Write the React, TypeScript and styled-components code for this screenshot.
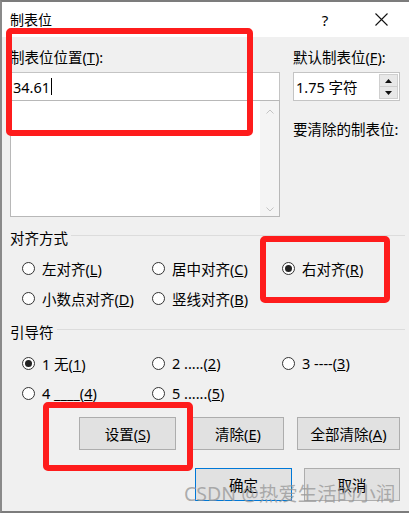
import styled, { createGlobalStyle } from "styled-components";

const GlobalStyle = createGlobalStyle`
  html, body {
    margin: 0;
    padding: 0;
    background: #ffffff;
  }
  body {
    font-family: "Noto Sans", "Noto Sans CJK SC", sans-serif;
    font-size: 14px;
    color: #000;
  }
  * {
    box-sizing: border-box;
  }
`;

const Window = styled.div`
  position: relative;
  width: 409px;
  height: 513px;
  background: #f0f0f0;
  border-top: 2px solid #7c7c7c;
  border-left: 2px solid #8a8a8a;
  border-bottom: 2px solid #7c7c7c;
  overflow: hidden;
`;

const TitleBar = styled.div`
  height: 35px;
  background: #ffffff;
  display: flex;
  align-items: center;
  padding-left: 8px;
`;

const TitleText = styled.div`
  flex: 1;
  font-size: 14px;
  line-height: 18px;
`;

const TitleButton = styled.div`
  width: 56px;
  display: flex;
  justify-content: center;
  align-items: center;
  font-size: 15px;
  line-height: 18px;
`;

const Body = styled.div`
  padding: 11px 9px 0 8px;
`;

const TopGrid = styled.div`
  display: grid;
  grid-template-columns: 270px 107px;
  column-gap: 13px;
`;

const Column = styled.div`
  display: flex;
  flex-direction: column;
`;

const Label = styled.div<{ $gap?: number }>`
  line-height: 18px;
  height: 18px;
  font-size: 14.5px;
  margin-top: ${(p) => p.$gap ?? 0}px;
  margin-bottom: 6px;
  white-space: nowrap;
`;

const TextInput = styled.div`
  height: 29px;
  background: #fff;
  border: 1px solid #c4c4c4;
  display: flex;
  align-items: center;
  padding-left: 2px;
  font-size: 14.5px;
`;

const Caret = styled.span`
  display: inline-block;
  width: 1px;
  height: 17px;
  background: #000;
  margin-left: 1px;
`;

const ListBox = styled.div`
  height: 117px;
  margin-top: -1px;
  background: #fff;
  border: 1px solid #b8b8b8;
  display: flex;
  justify-content: flex-end;
`;

const ScrollTrack = styled.div`
  width: 19px;
  background: #f4f4f4;
  display: flex;
  flex-direction: column;
  justify-content: space-between;
  align-items: center;
  padding: 8px 0 4px;
`;

const SpinBox = styled.div`
  height: 29px;
  background: #fff;
  border: 1px solid #c4c4c4;
  display: flex;
  align-items: center;
  padding-left: 2px;
  font-size: 14.5px;
`;

const SpinValue = styled.div`
  flex: 1;
  white-space: nowrap;
`;

const SpinButtons = styled.div`
  width: 19px;
  height: 25px;
  margin-right: 1px;
  display: flex;
  flex-direction: column;
`;

const SpinButton = styled.div`
  flex: 1;
  background: #e8e8e8;
  border: 1px solid #cfcfcf;
  display: flex;
  justify-content: center;
  align-items: center;
  & + & {
    border-top: none;
  }
`;

const GroupHeader = styled.div<{ $top: number }>`
  display: flex;
  align-items: center;
  gap: 3px;
  margin-top: ${(p) => p.$top}px;
  margin-right: -5px;
  line-height: 18px;
  height: 18px;
  font-size: 14.5px;
  &::after {
    content: "";
    flex: 1;
    height: 1px;
    margin-top: -5px;
    background: #dcdcdc;
  }
`;

const RadioGrid = styled.div<{ $top: number }>`
  display: grid;
  grid-template-columns: 130px 130px 130px;
  row-gap: 6px;
  padding-left: 12px;
  margin-top: ${(p) => p.$top}px;
  font-size: 14.5px;
`;

const RadioItem = styled.div`
  display: flex;
  align-items: center;
  gap: 7px;
  height: 24px;
  white-space: nowrap;
`;

const RadioCircle = styled.span<{ $checked?: boolean }>`
  width: 13px;
  height: 13px;
  border-radius: 50%;
  border: 1px solid #333;
  background: #fff;
  display: flex;
  justify-content: center;
  align-items: center;
  flex-shrink: 0;
  &::after {
    content: "";
    width: 7px;
    height: 7px;
    border-radius: 50%;
    background: ${(p) => (p.$checked ? "#222" : "transparent")};
  }
`;

const ButtonRow = styled.div<{ $top: number }>`
  display: flex;
  justify-content: flex-end;
  margin-top: ${(p) => p.$top}px;
`;

const Button = styled.div<{ $w: number; $gap?: number; $primary?: boolean }>`
  width: ${(p) => p.$w}px;
  height: 33px;
  margin-left: ${(p) => p.$gap ?? 0}px;
  background: #e1e1e1;
  border: 1px solid ${(p) => (p.$primary ? "#0078d7" : "#adadad")};
  display: flex;
  justify-content: center;
  align-items: center;
  white-space: nowrap;
  font-size: 14.5px;
`;

const Mark = styled.div<{ $x: number; $y: number; $w: number; $h: number }>`
  position: absolute;
  left: ${(p) => p.$x}px;
  top: ${(p) => p.$y}px;
  width: ${(p) => p.$w}px;
  height: ${(p) => p.$h}px;
  border: 6px solid #fe1c1c;
  border-radius: 5px;
  pointer-events: none;
`;

const Watermark = styled.div`
  position: absolute;
  left: 182px;
  top: 477px;
  font-family: "Noto Sans", "Noto Sans CJK SC", sans-serif;
  font-size: 19.5px;
  line-height: 30px;
  color: rgba(150, 150, 150, 0.75);
  white-space: nowrap;
`;

const Chevron = ({ up }: { up?: boolean }) => (
  <svg width="8" height="5" viewBox="0 0 8 5">
    <path
      d={up ? "M0.5 4.5 L4 1 L7.5 4.5" : "M0.5 0.5 L4 4 L7.5 0.5"}
      fill="none"
      stroke="#c4c4c4"
      strokeWidth="1"
    />
  </svg>
);

const Tri = ({ up }: { up?: boolean }) => (
  <svg width="7" height="4" viewBox="0 0 7 4">
    <path d={up ? "M0 4 L3.5 0 L7 4 Z" : "M0 0 L3.5 4 L7 0 Z"} fill="#111" />
  </svg>
);

const CloseIcon = () => (
  <svg width="13" height="13" viewBox="0 0 13 13">
    <path d="M0.5 0.5 L12.5 12.5 M12.5 0.5 L0.5 12.5" stroke="#111" strokeWidth="1.1" />
  </svg>
);

const Radio = ({ checked, children }: { checked?: boolean; children: React.ReactNode }) => (
  <RadioItem>
    <RadioCircle $checked={checked} />
    <span>{children}</span>
  </RadioItem>
);

export default function App() {
  return (
    <>
      <GlobalStyle />
      <Window>
        <TitleBar>
          <TitleText>制表位</TitleText>
          <TitleButton>?</TitleButton>
          <TitleButton>
            <CloseIcon />
          </TitleButton>
        </TitleBar>
        <Body>
          <TopGrid>
            <Column>
              <Label>
                制表位位置(<u>T</u>):
              </Label>
              <TextInput>
                34.61
                <Caret />
              </TextInput>
              <ListBox>
                <ScrollTrack>
                  <Chevron up />
                  <Chevron />
                </ScrollTrack>
              </ListBox>
            </Column>
            <Column>
              <Label>
                默认制表位(<u>F</u>):
              </Label>
              <SpinBox>
                <SpinValue>1.75 字符</SpinValue>
                <SpinButtons>
                  <SpinButton>
                    <Tri up />
                  </SpinButton>
                  <SpinButton>
                    <Tri />
                  </SpinButton>
                </SpinButtons>
              </SpinBox>
              <Label $gap={19}>要清除的制表位:</Label>
            </Column>
          </TopGrid>

          <GroupHeader $top={12}>对齐方式</GroupHeader>
          <RadioGrid $top={9}>
            <Radio>
              左对齐(<u>L</u>)
            </Radio>
            <Radio>
              居中对齐(<u>C</u>)
            </Radio>
            <Radio checked>
              右对齐(<u>R</u>)
            </Radio>
            <Radio>
              小数点对齐(<u>D</u>)
            </Radio>
            <Radio>
              竖线对齐(<u>B</u>)
            </Radio>
          </RadioGrid>

          <GroupHeader $top={13}>引导符</GroupHeader>
          <RadioGrid $top={10}>
            <Radio checked>
              1 无(<u>1</u>)
            </Radio>
            <Radio>
              2 .....(<u>2</u>)
            </Radio>
            <Radio>
              3 ----(<u>3</u>)
            </Radio>
            <Radio>
              4 ____(<u>4</u>)
            </Radio>
            <Radio>
              5 ......(<u>5</u>)
            </Radio>
          </RadioGrid>

          <ButtonRow $top={12}>
            <Button $w={97}>
              设置(<u>S</u>)
            </Button>
            <Button $w={92} $gap={16}>
              清除(<u>E</u>)
            </Button>
            <Button $w={103} $gap={13}>
              全部清除(<u>A</u>)
            </Button>
          </ButtonRow>
          <ButtonRow $top={18}>
            <Button $w={97} $primary>
              确定
            </Button>
            <Button $w={96} $gap={12}>
              取消
            </Button>
          </ButtonRow>
        </Body>

        <Mark $x={4} $y={26} $w={247} $h={108} />
        <Mark $x={258} $y={234} $w={130} $h={67} />
        <Mark $x={41} $y={400} $w={150} $h={69} />
        <Watermark>CSDN @热爱生活的小润</Watermark>
      </Window>
    </>
  );
}
